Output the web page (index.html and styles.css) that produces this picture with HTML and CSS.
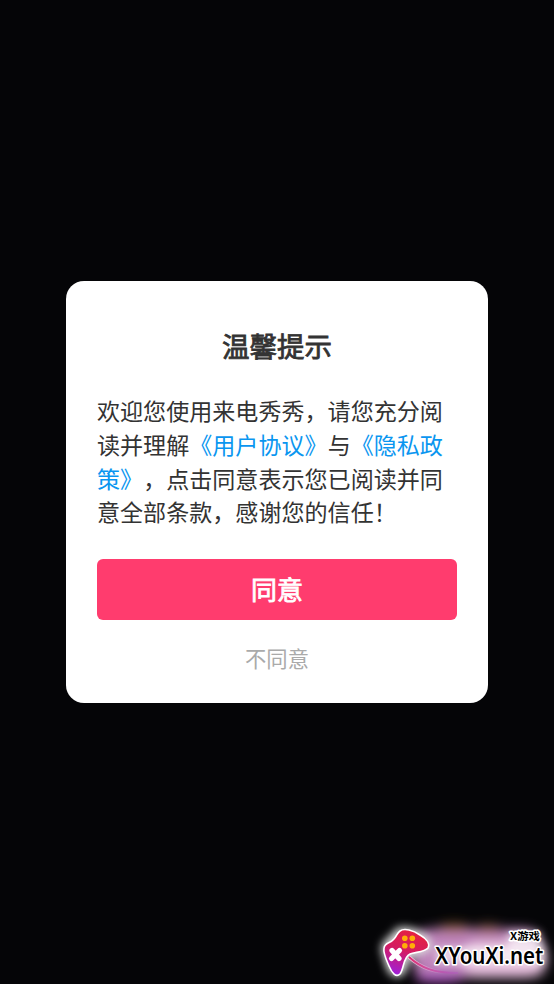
FILE: index.html
```html
<!DOCTYPE html>
<html lang="zh-CN">
<head>
<meta charset="utf-8">
<title>温馨提示</title>
<link rel="stylesheet" href="styles.css">
</head>
<body>
<main class="dialog">
  <h1 class="title">温馨提示</h1>
  <p class="message">欢迎您使用来电秀秀，请您充分阅<br>读并理解<a class="link">《用户协议》</a>与<a class="link">《隐私政<br>策》</a>，点击同意表示您已阅读并同<br>意全部条款，感谢您的信任！</p>
  <button class="agree">同意</button>
  <button class="decline">不同意</button>
</main>
<svg class="watermark" width="190" height="80" viewBox="0 0 190 80">
  <defs>
    <filter id="haze" x="-50%" y="-50%" width="200%" height="200%"><feGaussianBlur stdDeviation="6"/></filter>
    <filter id="glow" x="-50%" y="-50%" width="200%" height="200%"><feGaussianBlur stdDeviation="4"/></filter>
    <linearGradient id="pad" x1="0.6" y1="0" x2="0.3" y2="1">
      <stop offset="0" stop-color="#e52140"/><stop offset="0.45" stop-color="#d41c60"/><stop offset="1" stop-color="#9f20dc"/>
    </linearGradient>
    <linearGradient id="cable"><stop offset="0" stop-color="#dc286c"/><stop offset="1" stop-color="#b64fca" stop-opacity="0.3"/></linearGradient>
    <linearGradient id="cable-edge"><stop offset="0" stop-color="#f8d0e8"/><stop offset="0.7" stop-color="#e0a0d8" stop-opacity="0"/></linearGradient>
  </defs>
  <g filter="url(#haze)">
    <rect x="48" y="25" width="130" height="49" rx="18" fill="#bd82b9"/>
    <rect x="100" y="38" width="82" height="35" rx="14" fill="#e5bddb"/>
    <ellipse cx="90" cy="24" rx="16" ry="4" fill="#946033"/>
    <ellipse cx="124" cy="25" rx="13" ry="4" fill="#946047"/>
    <ellipse cx="75" cy="74" rx="25" ry="5" fill="#a34fb7"/>
  </g>
  <path d="M34 27C45 23 65 32 65 43C60 49 45 46 41 60C38 75 28 72 25 62L20 45C20 38 29 35 34 27Z" fill="#ddd" stroke="#ddd" stroke-width="6" filter="url(#glow)"/>
  <path d="M144 28H176V40H180V60H72V43H144Z" fill="#fff" opacity="0.65" filter="url(#glow)"/>
  <path d="M45 53C57 64 70 69 94 69" fill="none" stroke="url(#cable-edge)" stroke-width="3.6"/>
  <path d="M45 53C57 64 70 69 94 69" fill="none" stroke="url(#cable)" stroke-width="1.8"/>
  <path d="M36 27C40 24 49 26 56 31C63 35 66 40 64 44C61 48 51 48 46 50C39 53 40 65 36 70C32 74 28 69 25 62C22 55 19 49 20 44C21 38 26 40 30 35C33 32 33 29 36 27Z" fill="url(#pad)" stroke="#fff" stroke-width="1.6"/>
  <g fill="#ffad08"><circle cx="40.8" cy="34.2" r="2.8"/><circle cx="48.3" cy="34.2" r="2.8"/><circle cx="40.8" cy="41.7" r="2.8"/><circle cx="48.3" cy="41.7" r="2.8"/></g>
  <path d="M28 46.5L35 54.5M35.5 46.5L27.5 54.5" stroke="#fff" stroke-width="5.2" stroke-linecap="round"/>
  <text class="brand-small" x="146" y="36.3" textLength="30" lengthAdjust="spacingAndGlyphs">X游戏</text>
  <text class="brand" x="71.3" y="60" textLength="108" lengthAdjust="spacingAndGlyphs">XYouXi.net</text>
</svg>
</body>
</html>
```
FILE: styles.css
```css
* { box-sizing: border-box; }
body {
  margin: 0;
  height: 984px;
  overflow: hidden;
  display: grid;
  place-items: center;
  background: #050507;
  font-family: "Noto Sans CJK SC", sans-serif;
  text-spacing-trim: space-all;
}
.dialog {
  width: 422px;
  height: 422px;
  padding: 44px 31px 0;
  border-radius: 18px;
  background: #fff;
  color: #333;
}
.title {
  margin: 0;
  height: 40px;
  font-size: 27.5px;
  line-height: 40px;
  font-weight: 400;
  text-align: center;
  -webkit-text-stroke: 0.8px #333;
}
.message {
  margin: 29px 0 0;
  height: 136px;
  font-size: 23.07px;
  line-height: 33.8px;
  white-space: nowrap;
}
.link { color: #0a96f0; }
button {
  display: block;
  width: 100%;
  padding: 0;
  border: 0;
  font-family: inherit;
}
.agree {
  height: 61px;
  margin-top: 29px;
  border-radius: 6px;
  background: #ff3c6e;
  color: #fff;
  font-size: 26px;
  line-height: 59px;
  padding-bottom: 2px;
  -webkit-text-stroke: 0.8px #fff;
}
.decline {
  height: 40px;
  margin-top: 18px;
  background: none;
  color: #aaa;
  font-size: 21.3px;
  line-height: 40px;
}
.watermark {
  position: absolute;
  right: 0;
  bottom: 0;
}
.brand, .brand-small {
  fill: #000;
  stroke: #fff;
  paint-order: stroke;
  stroke-linejoin: round;
}
.brand {
  font: 600 23.5px "Noto Sans", sans-serif;
  stroke-width: 3px;
}
.brand-small {
  font: 700 10.5px "Noto Sans CJK SC", sans-serif;
  stroke-width: 3px;
}
```
